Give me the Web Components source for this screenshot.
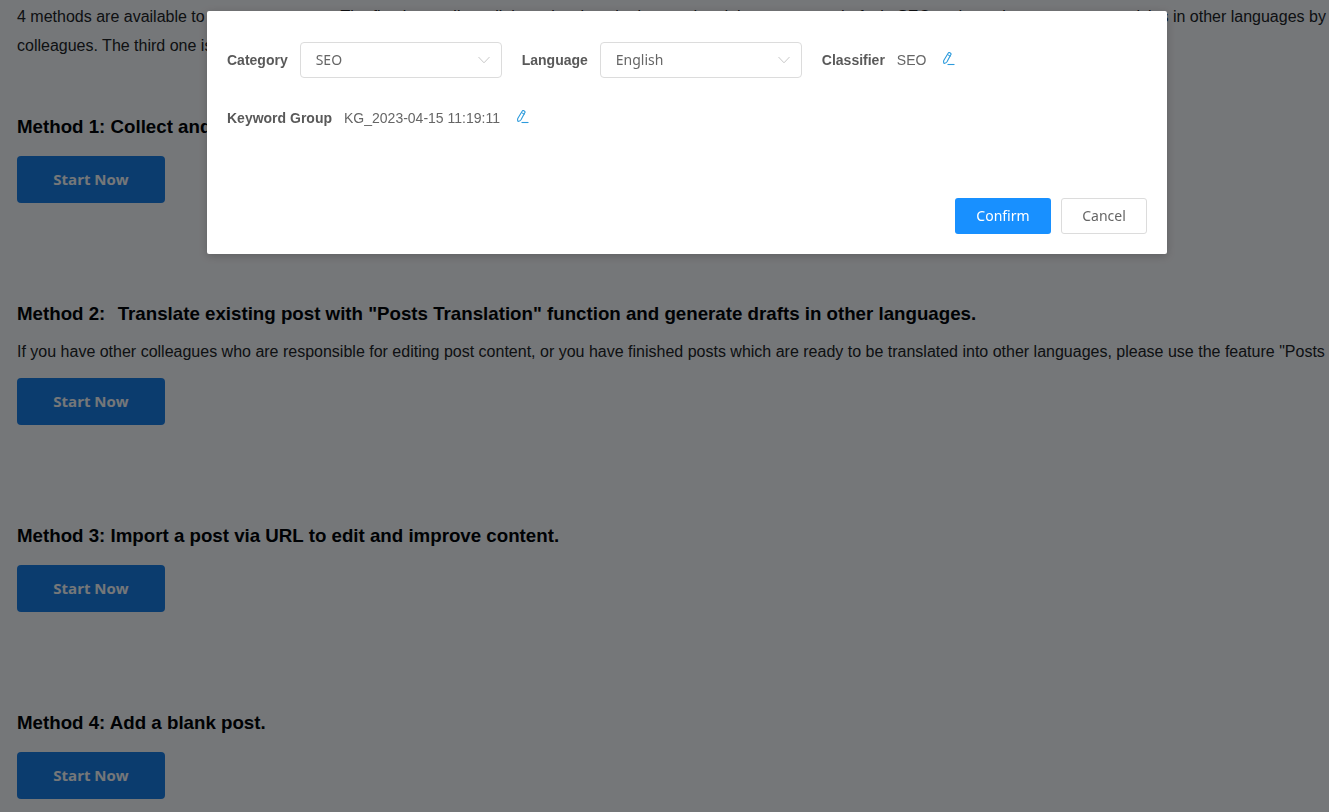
<!DOCTYPE html>
<html lang="en">
<head>
<meta charset="utf-8">
<title>Add post</title>
<style>
  html, body { margin: 0; padding: 0; background: #fff; height: 100%; overflow: hidden; }
</style>
</head>
<body>
<post-methods>
  <method-intro></method-intro>
  <method-block top="55" title="Method 1: Collect and organize keywords to generate drafts in multiple languages."></method-block>
  <method-block top="99" title='Method 2:&nbsp; <span style="margin-left:2px">Translate</span> existing post with "Posts Translation" function and generate drafts in other languages.' text='If you have other colleagues who are responsible for editing post content, or you have finished posts which are ready to be translated into other languages, please use the feature "Posts Translation".'></method-block>
  <method-block top="99" title="Method 3: Import a post via URL to edit and improve content."></method-block>
  <method-block top="99" title="Method 4: Add a blank post."></method-block>
</post-methods>

<modal-mask>
  <keyword-modal></keyword-modal>
</modal-mask>

<script>
// icono de lapiz
const PENCIL = `<svg width="14" height="14" viewBox="0 0 14 14" fill="none" xmlns="http://www.w3.org/2000/svg">
  <path d="M7.300 1c.4-.5 1-.6 1.500-.3l.8.5c.5.3.6.9.3 1.400L6 9.800c-.5.7-1.600 1.400-2.900 1.700-.6-1.100-.6-2.400-.2-3.200z" stroke="#2d9bdc" stroke-width="1.100" stroke-linejoin="round"/>
  <path d="M6.500 2.600l3 1.700" stroke="#2d9bdc" stroke-width="1"/>
  <path d="M6.500 12.500h7" stroke="#2d9bdc" stroke-width="1.100"/>
</svg>`;

class PostMethods extends HTMLElement {
  constructor() {
    super();
    this.attachShadow({ mode: 'open' });
    this.shadowRoot.innerHTML = `
      <style>
        :host {
          display: block;
          padding: 0 0 0 17px;
          height: 812px;
          overflow: hidden;
          font-family: "Liberation Sans", Arial, sans-serif;
          color: #222;
        }
      </style>
      <slot></slot>
    `;
  }
}

class MethodIntro extends HTMLElement {
  constructor() {
    super();
    this.attachShadow({ mode: 'open' });
    this.shadowRoot.innerHTML = `
      <style>
        :host { display: block; padding-top: 2px; font-size: 16px; line-height: 29px; white-space: nowrap; color: #222; }
        p { margin: 0; }
      </style>
      <p>4 methods are available to create your posts. The first is to collect all the points into the keyword and then generate drafts in SEO and translate to generate articles in other languages by translation with your</p>
      <p>colleagues. The third one is to import a post through URL, and the last one is to add a blank post manually.</p>
    `;
  }
}

class MethodBlock extends HTMLElement {
  constructor() {
    super();
    this.attachShadow({ mode: 'open' });
  }

  connectedCallback() {
    const title = this.getAttribute('title');
    const text = this.getAttribute('text');
    this.style.marginTop = this.getAttribute('top') + 'px';
    this.shadowRoot.innerHTML = `
      <style>
        :host { display: block; white-space: nowrap; }
        h2 { margin: 0; font-size: 18.72px; line-height: 24px; font-weight: 700; color: #000; }
        p { margin: 14px 0 0; font-size: 16px; line-height: 24px; color: #222; }
        button {
          display: block;
          margin-top: ${text ? 14 : 17}px;
          width: 148px;
          height: 47px;
          padding: 0 0 2px;
          border: 0;
          border-radius: 4px;
          background: #1a7fe8;
          color: #fff;
          font-family: "Open Sans", "Noto Sans", sans-serif;
          font-size: 15px;
          font-weight: 700;
        }
      </style>
      <h2>${title}</h2>
      ${text ? `<p>${text}</p>` : ''}
      <button type="button">Start Now</button>
    `;
  }
}

class ModalMask extends HTMLElement {
  constructor() {
    super();
    this.attachShadow({ mode: 'open' });
    this.shadowRoot.innerHTML = `
      <style>
        :host {
          position: fixed;
          inset: 0;
          display: block;
          background: rgba(0, 3, 8, .54);
        }
      </style>
      <slot></slot>
    `;
  }
}

class FieldSelect extends HTMLElement {
  constructor() {
    super();
    this.attachShadow({ mode: 'open' });
    this.shadowRoot.innerHTML = `
      <style>
        :host {
          display: flex;
          align-items: center;
          justify-content: space-between;
          box-sizing: border-box;
          width: 202px;
          height: 36px;
          padding: 0 11px 2px 15px;
          border: 1px solid #dcdcdc;
          border-radius: 4px;
          background: #fff;
          color: #666;
          font-family: "Noto Sans", sans-serif;
          font-size: 14px;
        }
        svg { display: block; margin-top: 2px; }
      </style>
      <slot></slot>
      <svg width="12" height="8" viewBox="0 0 12 8" fill="none"><path d="M.5 1L6 6.800 11.500 1" stroke="#c8c8c8" stroke-width="1"/></svg>
    `;
  }
}

class KeywordModal extends HTMLElement {
  constructor() {
    super();
    this.attachShadow({ mode: 'open' });
    this.shadowRoot.innerHTML = `
      <style>
        :host {
          position: absolute;
          left: 207px;
          top: 11px;
          box-sizing: border-box;
          width: 960px;
          height: 243px;
          padding: 31px 20px 20px;
          display: flex;
          flex-direction: column;
          background: #fff;
          border-radius: 2px;
          box-shadow: 0 2px 8px rgba(0, 0, 0, .2);
          font-family: "Liberation Sans", Arial, sans-serif;
          font-size: 14px;
          color: #666;
        }
        .row { display: flex; align-items: center; height: 36px; }
        .row + .row { margin-top: 22px; }
        .label { font-weight: 700; color: #595959; }
        .row field-select { margin-left: 12px; margin-right: 20px; }
        .value { margin-left: 12px; }
        .edit { display: block; margin-left: 15px; }
        .actions { margin-top: auto; display: flex; justify-content: flex-end; gap: 10px; }
        button {
          box-sizing: border-box;
          height: 36px;
          padding: 0 0 2px;
          border-radius: 3px;
          font-family: "Noto Sans", sans-serif;
          font-size: 14px;
        }
        .ok { width: 96px; border: 0; background: #1890ff; color: #fff; }
        .cancel { width: 86px; border: 1px solid #dcdcdc; background: #fff; color: #666; }
      </style>
      <div class="row">
        <span class="label">Category</span>
        <field-select>SEO</field-select>
        <span class="label">Language</span>
        <field-select>English</field-select>
        <span class="label">Classifier</span>
        <span class="value">SEO</span>
        <span class="edit">${PENCIL}</span>
      </div>
      <div class="row">
        <span class="label">Keyword Group</span>
        <span class="value">KG_2023-04-15 11:19:11</span>
        <span class="edit">${PENCIL}</span>
      </div>
      <div class="actions">
        <button class="ok" type="button">Confirm</button>
        <button class="cancel" type="button">Cancel</button>
      </div>
    `;
  }
}

customElements.define('post-methods', PostMethods);
customElements.define('method-intro', MethodIntro);
customElements.define('method-block', MethodBlock);
customElements.define('modal-mask', ModalMask);
customElements.define('field-select', FieldSelect);
customElements.define('keyword-modal', KeywordModal);
</script>
</body>
</html>
